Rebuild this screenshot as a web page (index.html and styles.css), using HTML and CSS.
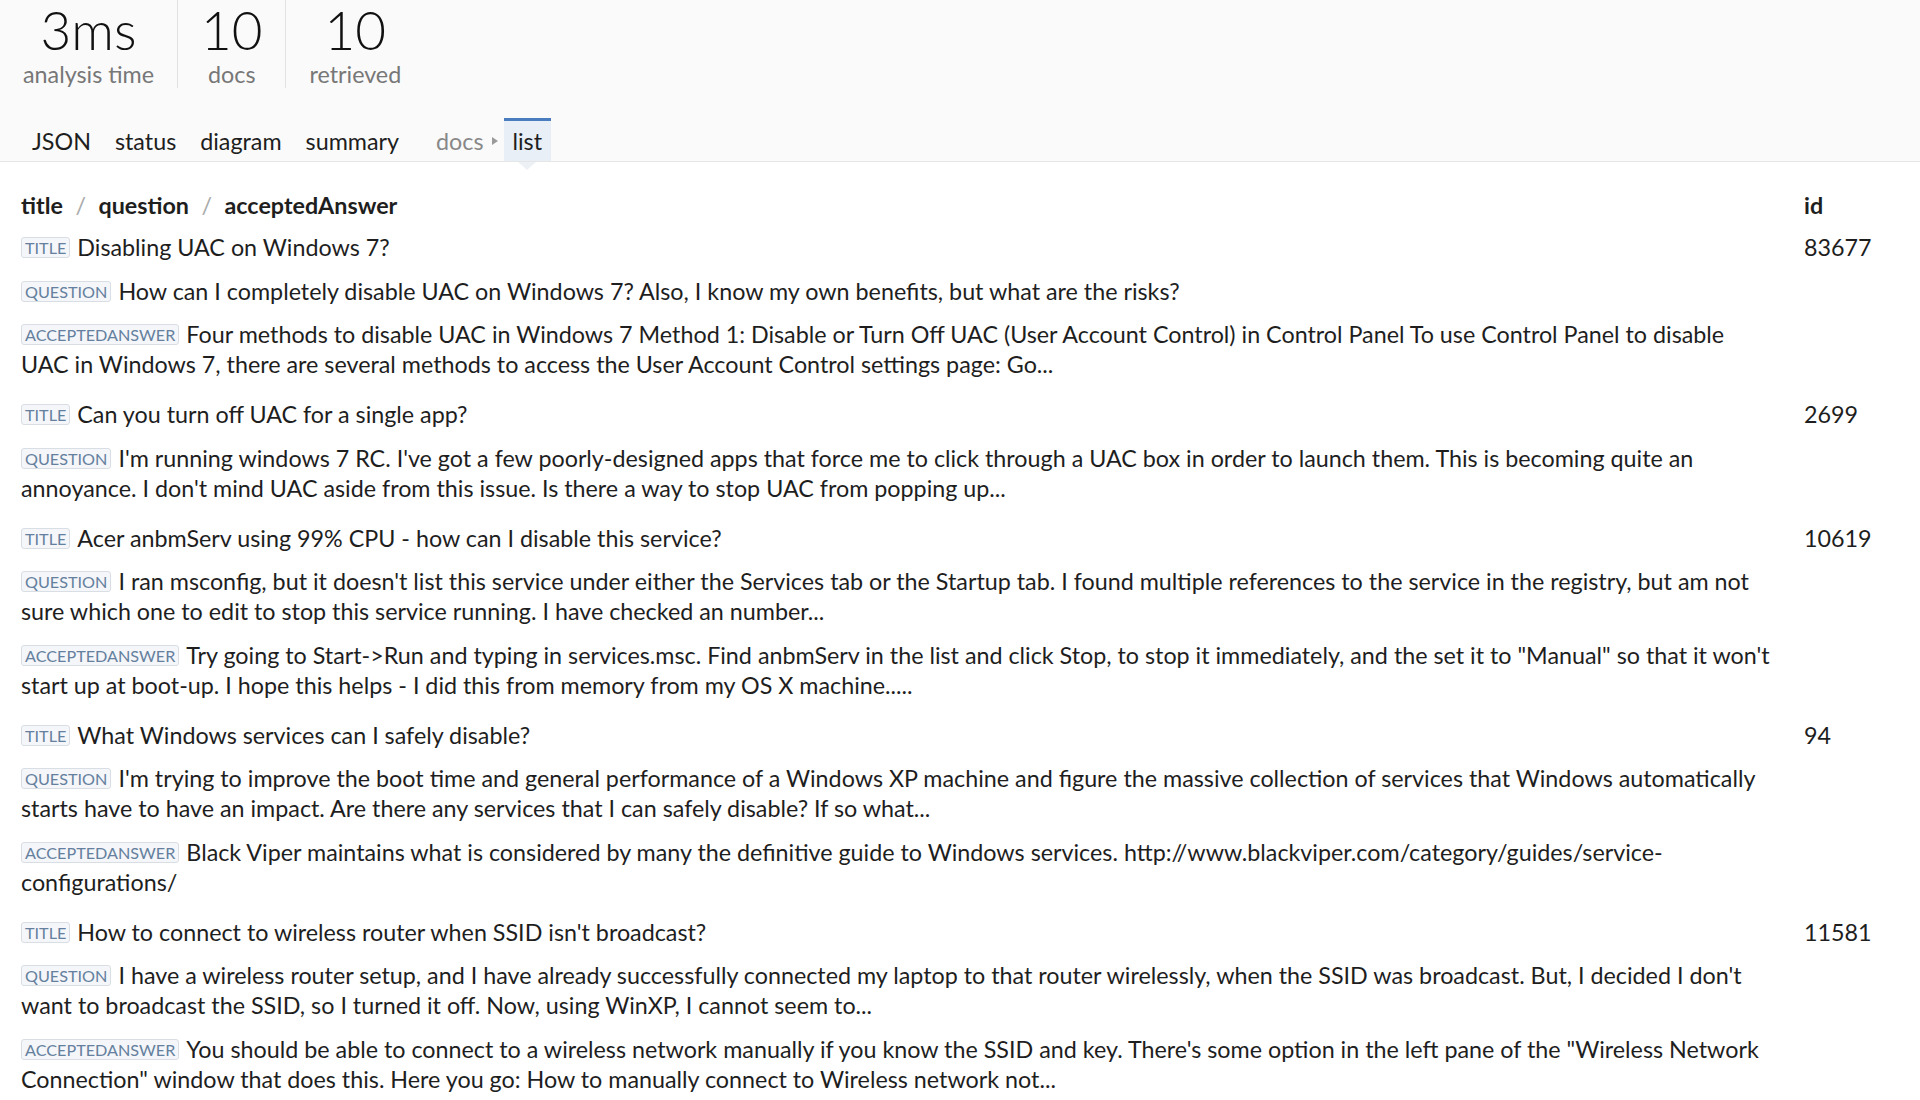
FILE: index.html
```html
<!DOCTYPE html>
<html lang="en">
<head>
<meta charset="utf-8">
<title>docs list</title>
<link rel="stylesheet" href="styles.css">
</head>
<body>
<header class="top">
  <div class="stats">
    <div class="stat"><div class="num">3ms</div><div class="label">analysis time</div></div>
    <div class="stat"><div class="num">10</div><div class="label">docs</div></div>
    <div class="stat"><div class="num">10</div><div class="label">retrieved</div></div>
  </div>
  <nav class="tabs">
    <span class="tab">JSON</span>
    <span class="tab">status</span>
    <span class="tab">diagram</span>
    <span class="tab">summary</span>
    <span class="crumb">docs<span class="caret"></span></span>
    <span class="tab active">list</span>
  </nav>
</header>
<main class="list">
  <div class="head">
    <div class="cols"><b>title</b><span class="sep">/</span><b>question</b><span class="sep">/</span><b>acceptedAnswer</b></div>
    <div class="idcol"><b>id</b></div>
  </div>

  <div class="doc">
    <div class="fields">
      <p><span class="badge">title</span>Disabling UAC on Windows 7?</p>
      <p><span class="badge">question</span>How can I completely disable UAC on Windows 7? Also, I know my own benefits, but what are the risks?</p>
      <p><span class="badge">acceptedAnswer</span>Four methods to disable UAC in Windows 7 Method 1: Disable or Turn Off UAC (User Account Control) in Control Panel To use Control Panel to disable UAC in Windows 7, there are several methods to access the User Account Control settings page: Go...</p>
    </div>
    <div class="idcol">83677</div>
  </div>

  <div class="doc">
    <div class="fields">
      <p><span class="badge">title</span>Can you turn off UAC for a single app?</p>
      <p><span class="badge">question</span>I'm running windows 7 RC. I've got a few poorly-designed apps that force me to click through a UAC box in order to launch them. This is becoming quite an annoyance. I don't mind UAC aside from this issue. Is there a way to stop UAC from popping up...</p>
    </div>
    <div class="idcol">2699</div>
  </div>

  <div class="doc">
    <div class="fields">
      <p><span class="badge">title</span>Acer anbmServ using 99% CPU - how can I disable this service?</p>
      <p><span class="badge">question</span>I ran msconfig, but it doesn't list this service under either the Services tab or the Startup tab. I found multiple references to the service in the registry, but am not sure which one to edit to stop this service running. I have checked an number...</p>
      <p><span class="badge">acceptedAnswer</span>Try going to Start-&gt;Run and typing in services.msc. Find anbmServ in the list and click Stop, to stop it immediately, and the set it to "Manual" so that it won't start up at boot-up. I hope this helps - I did this from memory from my OS X machine.....</p>
    </div>
    <div class="idcol">10619</div>
  </div>

  <div class="doc">
    <div class="fields">
      <p><span class="badge">title</span>What Windows services can I safely disable?</p>
      <p><span class="badge">question</span>I'm trying to improve the boot time and general performance of a Windows XP machine and figure the massive collection of services that Windows automatically starts have to have an impact. Are there any services that I can safely disable? If so what...</p>
      <p><span class="badge">acceptedAnswer</span>Black Viper maintains what is considered by many the definitive guide to Windows services. http://www.blackviper.com/category/guides/service-configurations/</p>
    </div>
    <div class="idcol">94</div>
  </div>

  <div class="doc">
    <div class="fields">
      <p><span class="badge">title</span>How to connect to wireless router when SSID isn't broadcast?</p>
      <p><span class="badge">question</span>I have a wireless router setup, and I have already successfully connected my laptop to that router wirelessly, when the SSID was broadcast. But, I decided I don't want to broadcast the SSID, so I turned it off. Now, using WinXP, I cannot seem to...</p>
      <p><span class="badge">acceptedAnswer</span>You should be able to connect to a wireless network manually if you know the SSID and key. There's some option in the left pane of the "Wireless Network Connection" window that does this. Here you go: How to manually connect to Wireless network not...</p>
    </div>
    <div class="idcol">11581</div>
  </div>
</main>
</body>
</html>
```

FILE: styles.css
```css
html, body {
  margin: 0;
  padding: 0;
  background: #ffffff;
}
body {
  font-family: Lato, "Open Sans", "Liberation Sans", sans-serif;
  color: #1e1e1e;
  font-size: 23.3px;
}
.top {
  background: #fafafa;
  border-bottom: 1px solid #e6e6e6;
}
.stats {
  display: flex;
}
.stat {
  padding: 0 23px;
  text-align: center;
  border-right: 1px solid #e2e2e2;
}
.stat:last-child {
  border-right: none;
}
.num {
  font-size: 53px;
  font-weight: 300;
  line-height: 60px;
  color: #111;
}
.label {
  line-height: 28px;
  color: #777;
}
.tabs {
  display: flex;
  align-items: stretch;
  padding-left: 20px;
  margin-top: 30px;
}
.tab {
  display: flex;
  align-items: center;
  padding: 0 12px;
  height: 40px;
  border-top: 3px solid transparent;
  color: #1e1e1e;
  position: relative;
}
.crumb {
  display: flex;
  align-items: center;
  color: #888;
  padding: 3px 0 0 25px;
  margin-right: 2px;
}
.caret {
  display: inline-block;
  width: 0;
  height: 0;
  border-left: 6px solid #9a9a9a;
  border-top: 4px solid transparent;
  border-bottom: 4px solid transparent;
  margin-left: 8px;
}
.tab.active {
  background: #e9eff6;
  border-top-color: #4a7dbf;
  padding: 0 9px;
  margin-left: 4px;
}
.tab.active::after {
  content: "";
  position: absolute;
  left: 50%;
  bottom: -9px;
  margin-left: -9px;
  border-left: 9px solid transparent;
  border-right: 9px solid transparent;
  border-top: 8px solid #edf1f6;
}
.list {
  padding: 28px 0 0 21px;
}
.head {
  display: flex;
  line-height: 30px;
  margin-bottom: 12px;
}
.cols {
  flex: 1;
}
.sep {
  color: #aaa;
  margin: 0 12.5px;
}
.idcol {
  width: 116px;
  flex: none;
  line-height: 30px;
}
.doc {
  display: flex;
  margin-bottom: 20px;
}
.fields {
  flex: 1;
  padding-right: 28px;
}
.fields p {
  margin: 0 0 13.5px;
  line-height: 30px;
}
.fields p:last-child {
  margin-bottom: 0;
}
.badge {
  display: inline-block;
  text-transform: uppercase;
  font-size: 16.2px;
  line-height: 19px;
  padding: 0 3px;
  color: #65809e;
  background: #f4f6f9;
  border: 1px solid #d9dee4;
  border-radius: 3px;
  margin-right: 7px;
  vertical-align: 2px;
}
```
